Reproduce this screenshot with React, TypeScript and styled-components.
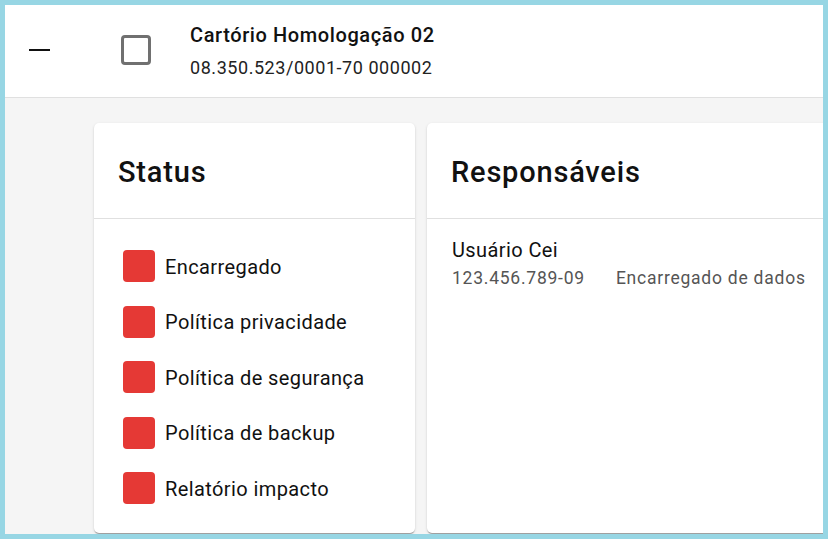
import React from 'react';
import styled, { createGlobalStyle } from 'styled-components';

const GlobalStyle = createGlobalStyle`
  html, body { margin: 0; padding: 0; }
  body { font-family: Roboto, "Noto Sans", Arial, sans-serif; color: rgba(0, 0, 0, 0.87); }
`;

const Frame = styled.div`
  width: 828px;
  height: 539px;
  box-sizing: border-box;
  border: 5px solid #97d6e4;
  background: #f5f5f5;
  overflow: hidden;
  display: flex;
  flex-direction: column;
`;

const RowHeader = styled.div`
  flex: none;
  height: 92px;
  background: #fff;
  border-bottom: 1px solid #e0e0e0;
  display: flex;
  align-items: center;
`;

const CollapseButton = styled.div`
  width: 21px;
  margin-left: 24px;
  display: flex;
  align-items: center;
`;

const Dash = styled.span`
  display: block;
  width: 21px;
  height: 2px;
  background: #111;
  margin-top: -2px;
`;

const CheckBox = styled.div`
  width: 30px;
  height: 30px;
  margin-left: 71px;
  margin-top: -2px;
  box-sizing: border-box;
  border: 3px solid #707070;
  border-radius: 4px;
`;

const Company = styled.div`
  margin-left: 39px;
  display: flex;
  flex-direction: column;
  gap: 9px;
  margin-top: -1px;
`;

const CompanyName = styled.div`
  font-size: 20px;
  font-weight: 500;
  line-height: 26px;
  letter-spacing: 0.6px;
  color: #111;
`;

const CompanyDoc = styled.div`
  font-size: 18px;
  line-height: 22px;
  letter-spacing: 0.55px;
  color: #222;
`;

const Body = styled.div`
  flex: 1;
  display: flex;
  gap: 12px;
  padding: 25px 0 0 89px;
  min-height: 0;
`;

const Card = styled.div<{ $width?: number }>`
  flex: ${(p) => (p.$width ? `0 0 ${p.$width}px` : '1 0 420px')};
  align-self: flex-start;
  height: 410px;
  background: #fff;
  border-radius: 5px;
  box-shadow: 0 2px 1px -1px rgba(0, 0, 0, 0.2), 0 1px 1px 0 rgba(0, 0, 0, 0.14), 0 1px 3px 0 rgba(0, 0, 0, 0.12);
  display: flex;
  flex-direction: column;
`;

const CardTitle = styled.div`
  height: 96px;
  box-sizing: border-box;
  border-bottom: 1px solid #e0e0e0;
  padding: 2px 0 0 24px;
  display: flex;
  align-items: center;
  font-size: 29px;
  font-weight: 500;
  letter-spacing: 0.8px;
  color: #111;
`;

const StatusList = styled.div`
  display: flex;
  flex-direction: column;
  gap: 23.5px;
  padding: 31px 0 0 29px;
`;

const StatusItem = styled.div`
  display: flex;
  align-items: center;
  gap: 10px;
  height: 32px;
  font-size: 20px;
  letter-spacing: 0.4px;
  color: #111;
`;

const Flag = styled.span<{ $ok?: boolean }>`
  width: 32px;
  height: 32px;
  border-radius: 4px;
  background: ${(p) => (p.$ok ? '#43a047' : '#e53935')};
  flex: none;
`;

const TextNudge = styled.span`
  padding-top: 1px;
`;

const Person = styled.div`
  padding: 18px 0 0 25px;
  display: flex;
  flex-direction: column;
  gap: 4px;
`;

const PersonName = styled.div`
  font-size: 20px;
  line-height: 26px;
  letter-spacing: 0.4px;
  color: #111;
`;

const PersonMeta = styled.div`
  display: flex;
  gap: 31px;
  font-size: 17.5px;
  line-height: 22px;
  letter-spacing: 0.76px;
  color: #555;
`;

const statuses = [
  'Encarregado',
  'Política privacidade',
  'Política de segurança',
  'Política de backup',
  'Relatório impacto',
];

export default function App() {
  return (
    <>
      <GlobalStyle />
      <Frame>
        <RowHeader>
          <CollapseButton><Dash /></CollapseButton>
          <CheckBox />
          <Company>
            <CompanyName>Cartório Homologação 02</CompanyName>
            <CompanyDoc>08.350.523/0001-70 000002</CompanyDoc>
          </Company>
        </RowHeader>
        <Body>
          <Card $width={321}>
            <CardTitle>Status</CardTitle>
            <StatusList>
              {statuses.map((s) => (
                <StatusItem key={s}>
                  <Flag />
                  <TextNudge>{s}</TextNudge>
                </StatusItem>
              ))}
            </StatusList>
          </Card>
          <Card>
            <CardTitle>Responsáveis</CardTitle>
            <Person>
              <PersonName>Usuário Cei</PersonName>
              <PersonMeta>
                <span>123.456.789-09</span>
                <span>Encarregado de dados</span>
              </PersonMeta>
            </Person>
          </Card>
        </Body>
      </Frame>
    </>
  );
}
